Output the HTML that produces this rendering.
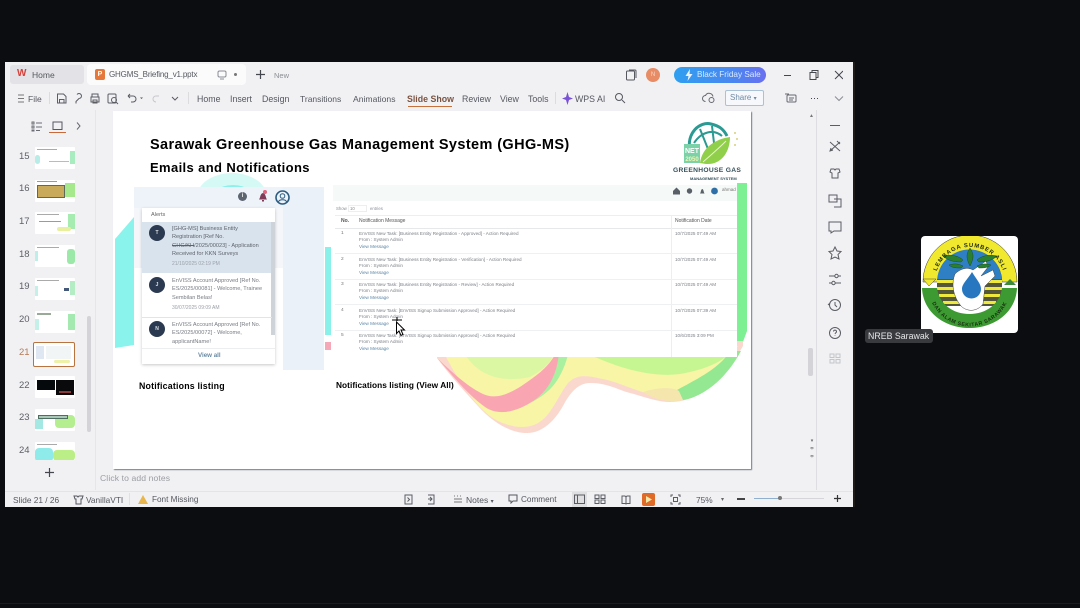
<!DOCTYPE html>
<html lang="en"><head><meta charset="utf-8"><title>GHGMS Briefing</title>
<style>
*{box-sizing:border-box}
html,body{margin:0;padding:0;width:1080px;height:608px;overflow:hidden;background:#0b0d10;font-family:"Liberation Sans",sans-serif}
#all{position:absolute;left:0;top:0;width:1080px;height:608px;filter:blur(.35px)}
.a{position:absolute;white-space:nowrap}
#win{position:absolute;left:5px;top:62px;width:848px;height:445px;background:#f1f1f4;overflow:hidden}
.t{font-size:9px;color:#55585f}
.m{font-size:8.800px;color:#55585f;top:94px}
.n{position:absolute;left:19px;font-size:9.500px;color:#5c5f65}
.th{position:absolute;left:35px;width:40px;height:22px;background:#fff;overflow:hidden;border-radius:1px}
.th i{position:absolute;display:block}
.row{position:absolute;left:359px;font-size:4.600px;line-height:6.400px;color:#7b7f86;white-space:nowrap}
.row b{font-weight:normal;color:#5c87a8}
.d{position:absolute;left:675px;font-size:4.600px;color:#7b7f86;white-space:nowrap}
.num{position:absolute;left:341px;font-size:4.800px;color:#777}
.av{position:absolute;left:149px;width:16px;height:16px;border-radius:50%;background:#2b3a50;color:#dfe3e8;font-size:5px;font-weight:bold;text-align:center;line-height:16px}
.al{position:absolute;left:172px;font-size:5.600px;line-height:8.400px;color:#777b82;white-space:nowrap}
.h{font-weight:bold;color:#000}
svg.i{position:absolute;fill:none;stroke:#5a5d63;stroke-width:1}
</style></head><body>
<div id="all">

<!-- window -->
<div id="win"></div>
<div class="a" style="left:853px;top:62px;width:2px;height:445px;background:#1d1a17"></div>

<!-- tab bar -->
<div class="a" style="left:10px;top:65px;width:74px;height:19px;background:#e3e3e7;border-radius:3px"></div>
<div class="a" style="left:87px;top:64px;width:159px;height:21px;background:#fbfbfc;border-radius:4px"></div>
<div class="a" style="left:17px;top:69px;font-size:10px;font-weight:bold;color:#d8403a;line-height:10px">W</div>
<div class="a t" style="left:32px;top:70px;font-size:8.500px">Home</div>
<div class="a" style="left:95px;top:69px;width:10px;height:11px;border-radius:2px;background:#e5783a;color:#fff;font-size:7px;font-weight:bold;text-align:center;line-height:11px">P</div>
<div class="a t" style="left:109px;top:70px;font-size:8px;letter-spacing:-.17px">GHGMS_Briefing_v1.pptx</div>
<svg class="i" style="left:216px;top:70px" width="12" height="10" viewBox="0 0 12 10"><rect x="2" y="1" width="8" height="6" rx="1.500" stroke="#8a8d93"/><path d="M4 9h4" stroke="#8a8d93"/></svg>
<div class="a" style="left:234px;top:73px;width:3px;height:3px;background:#777;border-radius:50%"></div>
<svg class="i" style="left:255px;top:69px" width="11" height="11" viewBox="0 0 11 11"><path d="M5.500 1v9M1 5.500h9" stroke="#44474d" stroke-width="1.200"/></svg>
<div class="a t" style="left:274px;top:71px;font-size:7.500px;color:#8a8d93">New</div>

<svg class="i" style="left:625px;top:69px" width="12" height="12" viewBox="0 0 12 12"><rect x="1.500" y="2" width="8" height="9" rx="1" stroke="#55585e"/><path d="M4 1h6a1 1 0 0 1 1 1v7" stroke="#55585e"/></svg>
<div class="a" style="left:646px;top:68px;width:14px;height:14px;border-radius:50%;background:#e88c66;color:#f7d6c6;font-size:6px;text-align:center;line-height:14px">N</div>
<div class="a" style="left:674px;top:67px;width:92px;height:16px;border-radius:8px;background:linear-gradient(90deg,#2f9ff0,#4b86f0 65%,#6a6ff0);color:#d9ebff;font-size:8.200px;line-height:16px;padding-left:23px">Black Friday Sale</div>
<svg class="a" style="left:685px;top:69px" width="8" height="12" viewBox="0 0 8 12"><path d="M5 0 0.500 7H3.500L2.500 12 7.500 5H4.500Z" fill="#eaf4ff"/></svg>
<svg class="i" style="left:783px;top:69px" width="60" height="12" viewBox="0 0 60 12"><path d="M1 6.500h7" stroke="#44474d"/><rect x="27" y="3.500" width="6" height="7" stroke="#44474d"/><path d="M29 3.500V1.500h6v7h-2" stroke="#44474d"/><path d="M52 2l8 8M60 2l-8 8" stroke="#44474d"/></svg>

<!-- menu bar -->
<svg class="i" style="left:17px;top:94px" width="8" height="9" viewBox="0 0 8 9"><path d="M1 1h6M1 4.500h6M1 8h6" stroke="#777"/></svg>
<div class="a m" style="left:28px;font-size:8.500px;top:94px">File</div>
<div class="a" style="left:49px;top:92px;width:1px;height:12px;background:#dcdcdf"></div>
<svg class="i" style="left:56px;top:92px" width="125" height="13" viewBox="0 0 125 13" stroke="#55585e"><path d="M1.500 2h6l2.500 2.500V11h-8.500Z M3.500 11V7.500h4.500V11"/><path d="M21 2.500a2.500 2.500 0 1 1 2 4l-3 3v2" /><path d="M36 5V2h6v3M35 5h8v5h-8Z M37 8h4v3h-4Z"/><rect x="52" y="2" width="8" height="9" rx="1"/><circle cx="58" cy="8" r="2.500"/><path d="M60 10l2 2"/><path d="M72 4h5a3 3 0 0 1 0 6h-2M72 4l2-2M72 4l2 2"/><path d="M84 5.500l1.500 1.500L87 5.500" fill="#555" stroke="none"/><path d="M103 4h-3a3 3 0 0 0 0 6" stroke="#c8c8cc"/><path d="M116 5l3 3 3-3"/></svg>
<div class="a" style="left:188px;top:92px;width:1px;height:12px;background:#dcdcdf"></div>
<div class="a m" style="left:197px">Home</div>
<div class="a m" style="left:230px">Insert</div>
<div class="a m" style="left:262px">Design</div>
<div class="a m" style="left:300px;font-size:8.500px">Transitions</div>
<div class="a m" style="left:353px;font-size:8.600px">Animations</div>
<div class="a m" style="left:407px;font-weight:bold;color:#7a5340;font-size:8.800px">Slide Show</div>
<div class="a" style="left:408px;top:106px;width:44px;height:1px;background:#c8703c"></div>
<div class="a m" style="left:462px">Review</div>
<div class="a m" style="left:500px">View</div>
<div class="a m" style="left:528px">Tools</div>
<div class="a" style="left:555px;top:92px;width:1px;height:12px;background:#dcdcdf"></div>
<svg class="a" style="left:562px;top:92px" width="11" height="13" viewBox="0 0 11 13"><path d="M5.500 0 7 5l4 1.500L7 8l-1.500 5L4 8 0 6.500 4 5Z" fill="#7a52d8"/></svg>
<div class="a m" style="left:575px">WPS AI</div>
<svg class="i" style="left:614px;top:92px" width="12" height="12" viewBox="0 0 12 12"><circle cx="5" cy="5" r="3.500" stroke="#55585e"/><path d="M8 8l3 3" stroke="#55585e"/></svg>
<svg class="i" style="left:702px;top:92px" width="13" height="12" viewBox="0 0 13 12"><path d="M3.500 9.500a3 3 0 0 1 0-6 4 4 0 0 1 7.500 1" stroke="#66696f"/><circle cx="9.500" cy="8" r="2.500" stroke="#66696f"/></svg>
<div class="a" style="left:725px;top:90px;width:39px;height:16px;border:1px solid #a9c2d6;border-radius:2px;background:#f6f8fb;color:#6d8ba5;font-size:8px;line-height:14px;padding-left:4px">Share <span style="font-size:6px">▾</span></div>
<svg class="i" style="left:785px;top:92px" width="60" height="13" viewBox="0 0 60 13"><rect x="2" y="3" width="9" height="7" rx="1" stroke="#66696f"/><path d="M0 2h4M4 6h5M4 8h4" stroke="#66696f"/><path d="M26 6.500h1M29 6.500h1M32 6.500h1" stroke="#44474d"/><path d="M50 4.500l4 4 4-4" stroke="#8a8d93"/></svg>

<!-- left panel -->
<div class="a" style="left:95px;top:110px;width:1px;height:380px;background:#e6e6e9"></div>
<svg class="i" style="left:31px;top:121px" width="56" height="11" viewBox="0 0 56 11"><path d="M1 1h2v2H1ZM1 5h2v2H1ZM1 9h2v1H1ZM5 2h6M5 6h6M5 9.500h4" stroke="#6a6d73"/><rect x="22" y="1" width="9" height="7.500" stroke="#55585e"/><path d="M46 1.500l3 3.500-3 3.500" stroke="#66696f"/></svg>
<div class="a" style="left:49px;top:132px;width:17px;height:1px;background:#c9683a"></div>

<div class="n" style="top:151px">15</div>
<div class="th" style="top:147px"><i style="left:2px;top:2px;width:20px;height:1px;background:#aaa"></i><i style="left:0;top:8px;width:5px;height:9px;background:#b8ece6;border-radius:3px"></i><i style="left:35px;top:4px;width:5px;height:13px;background:#a9ecc0"></i><i style="left:14px;top:14px;width:20px;height:1px;background:#bbb"></i></div>
<div class="n" style="top:183px">16</div>
<div class="th" style="top:180px"><i style="left:2px;top:5px;width:28px;height:13px;background:#c9a95a;border:1px solid #5c6a58"></i><i style="left:30px;top:3px;width:10px;height:14px;background:#a6e88c"></i><i style="left:2px;top:1px;width:20px;height:1px;background:#999"></i></div>
<div class="n" style="top:216px">17</div>
<div class="th" style="top:212px"><i style="left:2px;top:2px;width:22px;height:1px;background:#aaa"></i><i style="left:33px;top:2px;width:7px;height:15px;background:#a6ecb0"></i><i style="left:22px;top:15px;width:14px;height:4px;background:#e8f0a0;border-radius:3px"></i><i style="left:4px;top:9px;width:22px;height:1px;background:#99a"></i></div>
<div class="n" style="top:249px">18</div>
<div class="th" style="top:245px"><i style="left:2px;top:2px;width:22px;height:1px;background:#aaa"></i><i style="left:32px;top:4px;width:8px;height:15px;background:#9be8a8;border-radius:3px"></i><i style="left:0;top:6px;width:3px;height:10px;background:#bdeee8"></i></div>
<div class="n" style="top:281px">19</div>
<div class="th" style="top:278px"><i style="left:2px;top:2px;width:22px;height:1px;background:#aaa"></i><i style="left:29px;top:10px;width:5px;height:3px;background:#44597a"></i><i style="left:35px;top:3px;width:5px;height:14px;background:#b4ecc4"></i><i style="left:0;top:8px;width:3px;height:10px;background:#c4f0ea"></i></div>
<div class="n" style="top:314px">20</div>
<div class="th" style="top:311px"><i style="left:2px;top:2px;width:14px;height:2px;background:#9a9"></i><i style="left:33px;top:3px;width:7px;height:16px;background:#a4eab0"></i><i style="left:0;top:8px;width:4px;height:11px;background:#c4f0ea"></i></div>
<div class="n" style="top:347px;color:#b57a55">21</div>
<div class="a" style="left:33px;top:342px;width:42px;height:25px;background:#fff;border:1.500px solid #b9733f;border-radius:2px"><i style="position:absolute;left:2px;top:3px;width:8px;height:13px;background:#dfe7f2"></i><i style="position:absolute;left:12px;top:3px;width:25px;height:13px;background:#f2f5f6"></i><i style="position:absolute;left:20px;top:17px;width:16px;height:3px;background:#eef1a8;border-radius:2px"></i></div>
<div class="n" style="top:380px">22</div>
<div class="th" style="top:376px"><i style="left:2px;top:4px;width:18px;height:10px;background:#06090c"></i><i style="left:21px;top:4px;width:18px;height:15px;background:#0a0a0c"></i><i style="left:24px;top:15px;width:12px;height:2px;background:#8a3a3a"></i></div>
<div class="n" style="top:412px">23</div>
<div class="th" style="top:409px"><i style="left:0;top:10px;width:8px;height:10px;background:#a4e8e4"></i><i style="left:20px;top:6px;width:20px;height:13px;background:#b4ee90;border-radius:4px"></i><i style="left:3px;top:6px;width:30px;height:4px;background:#a9c8b8;border:1px solid #4e6e62"></i></div>
<div class="n" style="top:445px">24</div>
<div class="th" style="top:442px"><i style="left:0;top:6px;width:18px;height:14px;background:#8feaea;border-radius:4px"></i><i style="left:18px;top:8px;width:22px;height:11px;background:#bcee88;border-radius:4px"></i><i style="left:2px;top:2px;width:20px;height:1px;background:#aaa"></i></div>
<div class="a" style="left:5px;top:460px;width:90px;height:30px;background:#f1f1f4"></div>
<svg class="i" style="left:44px;top:467px" width="11" height="11" viewBox="0 0 11 11"><path d="M5.500 1v9M1 5.500h9" stroke="#44474d" stroke-width="1.200"/></svg>
<div class="a" style="left:87px;top:316px;width:4px;height:116px;background:#d4d4d8;border-radius:2px"></div>

<!-- slide -->
<div class="a" style="left:113px;top:111px;width:638px;height:358px;background:#fff;box-shadow:1px 1px 1px #77797c;overflow:hidden" id="slide">
<svg style="position:absolute;left:0;top:0" width="638" height="358" viewBox="0 0 638 358">
<ellipse cx="119" cy="86" rx="35" ry="24" fill="#d5faf5"/>
<ellipse cx="120" cy="92" rx="25" ry="18" fill="#8ef0ea"/>
<path d="M2 128 21 106V234L2 237Z" fill="#8af3ec"/>
<path d="M212 136H218V224H212Z" fill="#8af0ea"/>
<path d="M212 231H218V239H212Z" fill="#f5a9b8"/>
<path d="M624 72H634V220L624 247Z" fill="#7df094"/>
<path d="M324 247C335 262 350 279 365 295C380 312 398 322 414 322C430 322 442 309 450 295C457 282 465 272 477 272C495 272 505 279 517 282C532 286 545 291 557 291C575 291 590 283 600 272C612 262 620 252 630 235V230H324Z" fill="#fbd8ce"/>
<path d="M330 240C345 270 365 300 385 310C400 317 415 318 425 312C438 305 445 285 455 272C465 262 475 265 490 268C510 272 530 285 555 285C575 285 590 275 600 262L625 235Z" fill="#f8f5a6"/>
<path d="M350 240C364 266 390 272 417 266C430 259 440 250 442 240Z" fill="#dcf7a4"/>
<path d="M324 240V247C340 262 355 276 370 283C385 290 402 280 417 269C430 260 438 252 444 240H450C445 262 435 282 417 292C402 301 385 305 372 296C355 284 340 265 324 247Z" fill="#f9a6b2"/>
<path d="M446 240H456C449 269 437 282 417 292C435 282 445 262 446 240Z" fill="#a9f0a0"/>
<path d="M470 240C500 256 544 270 577 261C594 257 607 252 620 240Z" fill="#c6f692"/>
<path d="M628 240C620 255 608 270 594 279C585 285 577 288 570 289C568 285 566 282 564 279C584 268 607 257 617 240Z" fill="#94e892"/>
<path d="M530 281C545 276 560 276 566 280L570 289C555 292 540 288 530 281Z" fill="#f5e6ae"/>
</svg>
<div class="a h" style="left:37px;top:25.500px;font-size:14.500px;letter-spacing:.39px">Sarawak Greenhouse Gas Management System (GHG-MS)</div>
<div class="a h" style="left:37px;top:49px;font-size:13px;letter-spacing:.37px">Emails and Notifications</div>
<div class="a h" style="left:26px;top:270px;font-size:8.800px;letter-spacing:.2px">Notifications listing</div>
<div class="a h" style="left:223px;top:269px;font-size:8.300px;letter-spacing:.05px">Notifications listing (View All)</div>
<!-- logo -->
<svg style="position:absolute;left:565px;top:8px" width="65" height="48" viewBox="0 0 65 48">
<path d="M12 32C8 14 22 2 33 5 42 7 46 11 49 17" fill="none" stroke="#2a9a92" stroke-width="3"/>
<path d="M16 24C24 12 36 10 44 17M22 10 30 30M34 7 36 24" fill="none" stroke="#2a9a92" stroke-width="2"/>
<path d="M22 44C24 28 38 20 52 18 52 32 44 46 28 45Z" fill="#8fcf4a"/>
<path d="M25 43C33 36 40 30 48 22" stroke="#e8f5c8" fill="none"/>
<rect x="6" y="25" width="16" height="19" fill="#7cd2a8"/>
<text x="14" y="34" font-size="7" font-weight="bold" fill="#fff" text-anchor="middle" font-family="Liberation Sans">NET</text>
<text x="14" y="42" font-size="6" font-weight="bold" fill="#f0f5b0" text-anchor="middle" font-family="Liberation Sans">2050</text>
<circle cx="57" cy="14" r="1" fill="#d9cf7a"/><circle cx="59" cy="20" r="1" fill="#d9cf7a"/><circle cx="57" cy="26" r="1" fill="#d9cf7a"/>
</svg>
<div class="a" style="left:560px;top:56px;font-size:6.700px;font-weight:bold;color:#35505a;letter-spacing:.3px">GREENHOUSE GAS</div>
<div class="a" style="left:577px;top:65px;font-size:4px;font-weight:bold;color:#35505a">MANAGEMENT SYSTEM</div>
</div>

<!-- left notification shot -->
<div class="a" style="left:134px;top:187px;width:190px;height:21px;background:#eef3fa"></div>
<div class="a" style="left:134px;top:208px;width:149px;height:60px;background:#f4f6fa"></div>
<div class="a" style="left:283px;top:187px;width:41px;height:183px;background:#eaf1f9"></div>
<div class="a" style="left:238px;top:192px;width:9px;height:9px;border-radius:50%;background:#5d6570;color:#eee;font-size:6px;font-weight:bold;text-align:center;line-height:9px">i</div>
<svg class="a" style="left:258px;top:190px" width="10" height="12" viewBox="0 0 10 12"><path d="M1 9.500C2.500 8 2 3.500 5 3 8 3.500 7.500 8 9 9.500Z M4 10h2v1.500H4Z" fill="#7f3b58"/><circle cx="7" cy="2" r="2" fill="#e0657d"/></svg>
<svg class="a" style="left:275px;top:190px" width="15" height="15" viewBox="0 0 15 15"><circle cx="7.500" cy="7.500" r="6.500" fill="#eef3fa" stroke="#2b5b80" stroke-width="1.600"/><circle cx="7.500" cy="6" r="2.300" fill="none" stroke="#2b5b80"/><path d="M3.500 12c.5-3 7.500-3 8 0" fill="none" stroke="#2b5b80"/></svg>

<div class="a" style="left:142px;top:208px;width:133px;height:156px;background:#fff;box-shadow:0 1px 3px rgba(0,0,0,.22)"></div>
<div class="a" style="left:151px;top:212px;font-size:5.600px;color:#666">Alerts</div>
<div class="a" style="left:142px;top:222px;width:130px;height:51px;background:#d9e3ee"></div>
<div class="a" style="left:271px;top:222px;width:4px;height:113px;background:#ced3da"></div>
<div class="av" style="top:225px">T</div>
<div class="al" style="top:225px;color:#5e636b">[GHG-MS] Business Entity<br>Registration [Ref No.<br><span style="text-decoration:line-through">GHG/KH</span>/2025/00023] - Application<br>Received for KKN Surveys</div>
<div class="al" style="top:260px;color:#9ba0a8;font-size:5px">21/10/2025 02:19 PM</div>
<div class="av" style="top:277px">J</div>
<div class="al" style="top:277px">EnVISS Account Approved [Ref No.<br>ES/2025/00081] - Welcome, Trainee<br>Sembilan Belas!</div>
<div class="al" style="top:304px;color:#9ba0a8;font-size:5px">30/07/2025 09:09 AM</div>
<div class="a" style="left:142px;top:317px;width:130px;height:1px;background:#e2e4e8"></div>
<div class="av" style="top:321px">N</div>
<div class="al" style="top:321px">EnVISS Account Approved [Ref No.<br>ES/2025/00072] - Welcome,<br>applicantName!</div>
<div class="a" style="left:142px;top:348px;width:133px;height:1px;background:#edeef0"></div>
<div class="a" style="left:198px;top:352px;font-size:6.200px;font-weight:bold;color:#6a8aa4">View all</div>

<!-- right table shot -->
<div class="a" style="left:333px;top:185px;width:404px;height:172px;background:#fff"></div>
<div class="a" style="left:333px;top:185px;width:404px;height:16px;background:#f5f9f7"></div>
<svg class="a" style="left:672px;top:186px" width="65" height="10" viewBox="0 0 65 10"><path d="M1 5 4.500 1.500 8 5V8.500H1Z" fill="#5a6068"/><circle cx="17.500" cy="5" r="2.700" fill="#5a6068"/><path d="M28 7.500c1-1 .7-4 2.300-4.500 1.500.5 1.300 3.500 2.300 4.500Z" fill="#5a6068"/><circle cx="42.500" cy="5" r="3.400" fill="#2f6fa8"/></svg>
<div class="a" style="left:722px;top:187px;font-size:4.500px;color:#777">ahmad</div>
<div class="a" style="left:336px;top:206px;font-size:4.300px;color:#8a8e94">Show</div>
<div class="a" style="left:348px;top:205px;width:19px;height:7px;border:1px solid #eee;font-size:4.300px;color:#888;padding-left:1px;line-height:5px">10</div>
<div class="a" style="left:370px;top:206px;font-size:4.300px;color:#8a8e94">entries</div>
<div class="a" style="left:335px;top:215px;width:402px;height:1px;background:#eceef0"></div>
<div class="a" style="left:335px;top:228px;width:402px;height:1px;background:#e6e8ea"></div>
<div class="a" style="left:671px;top:215px;width:1px;height:142px;background:#eceef0"></div>
<div class="a" style="left:341px;top:218px;font-size:5px;color:#555;font-weight:bold">No.</div>
<div class="a" style="left:359px;top:218px;font-size:5px;color:#555">Notification Message</div>
<div class="a" style="left:675px;top:218px;font-size:5px;color:#555">Notification Date</div>

<div class="num" style="top:231px">1</div>
<div class="row" style="top:231px">EnVISS New Task: [Business Entity Registration - Approved] - Action Required<br>From : System Admin<br><b>View Message</b></div>
<div class="d" style="top:231px">10/7/2025 07:49 AM</div>
<div class="a" style="left:335px;top:253px;width:402px;height:1px;background:#eff0f2"></div>
<div class="num" style="top:257px">2</div>
<div class="row" style="top:257px">EnVISS New Task: [Business Entity Registration - Verification] - Action Required<br>From : System Admin<br><b>View Message</b></div>
<div class="d" style="top:257px">10/7/2025 07:49 AM</div>
<div class="a" style="left:335px;top:279px;width:402px;height:1px;background:#eff0f2"></div>
<div class="num" style="top:282px">3</div>
<div class="row" style="top:282px">EnVISS New Task: [Business Entity Registration - Review] - Action Required<br>From : System Admin<br><b>View Message</b></div>
<div class="d" style="top:282px">10/7/2025 07:49 AM</div>
<div class="a" style="left:335px;top:304px;width:402px;height:1px;background:#eff0f2"></div>
<div class="num" style="top:308px">4</div>
<div class="row" style="top:308px">EnVISS New Task: [EnVISS Signup Submission Approved] - Action Required<br>From : System Admin<br><b>View Message</b></div>
<div class="d" style="top:308px">10/7/2025 07:39 AM</div>
<div class="a" style="left:335px;top:330px;width:402px;height:1px;background:#eff0f2"></div>
<div class="num" style="top:333px">5</div>
<div class="row" style="top:333px">EnVISS New Task: [EnVISS Signup Submission Approved] - Action Required<br>From : System Admin<br><b>View Message</b></div>
<div class="d" style="top:333px">10/6/2025 3:09 PM</div>

<!-- mouse cursor -->
<svg class="a" style="left:391px;top:317px" width="16" height="20" viewBox="0 0 16 20"><path d="M5.500 5V16.500L8 14 10 18.500 12 17.500 10 13H13.500Z" fill="#fff" stroke="#000" stroke-width="1"/><path d="M6 0v4M1 3h10" stroke="#000" stroke-width="1.100"/></svg>

<!-- right side of workspace -->
<div class="a" style="left:816px;top:110px;width:1px;height:380px;background:#dedee2"></div>
<div class="a" style="left:808px;top:348px;width:5px;height:28px;background:#d4d4d8;border-radius:2px"></div>
<div class="a" style="left:809px;top:113px;font-size:5px;color:#777">▲</div>
<div class="a" style="left:809px;top:437px;font-size:5px;line-height:8px;color:#666;white-space:normal;width:6px;text-align:center">▾<br>≑<br>≑</div>
<svg class="i" style="left:827px;top:120px" width="16" height="246" viewBox="0 0 16 246" stroke="#66696f">
<path d="M3 5.500h10"/>
<path d="M3 22l10 9M13 22 3 31M10 21l3 3M4 28l-1 3 3-1"/>
<path d="M4 49h3l1 1 1-1h3l1 3-2 1v5H5v-5l-2-1Z"/>
<path d="M2 75h8v7H2ZM7 79h7v8H7"/>
<path d="M2 102h12v9H7l-3 2v-2H2Z"/>
<path d="M8 127l2 4 4 .5-3 3 1 4.500-4-2-4 2 1-4.500-3-3 4-.5Z"/>
<path d="M2 156h6M11 156h3M2 163h3M8 163h6"/><circle cx="9.500" cy="156" r="1.700"/><circle cx="6.500" cy="163" r="1.700"/>
<circle cx="8" cy="185" r="5.500"/><path d="M8 182v3l2 2M1 185l1.500-1.500"/>
<circle cx="8" cy="213" r="5.500"/><path d="M6.500 211.500a1.500 1.500 0 1 1 2 1.500l-.5 1M8 215.500v.5"/>
<g stroke="#c4c5c9"><rect x="3" y="234" width="4" height="3.500"/><rect x="9" y="234" width="4" height="3.500"/><rect x="3" y="239.500" width="4" height="3.500"/><rect x="9" y="239.500" width="4" height="3.500"/></g>
</svg>

<!-- notes -->
<div class="a" style="left:100px;top:473px;font-size:8.600px;color:#9a9da2;letter-spacing:.1px">Click to add notes</div>

<!-- status bar -->
<div class="a" style="left:5px;top:491px;width:848px;height:1px;background:#e4e4e7"></div>
<div class="a t" style="left:13px;top:495px;font-size:8.300px">Slide 21 / 26</div>
<svg class="i" style="left:73px;top:494px" width="11" height="11" viewBox="0 0 11 11"><path d="M1 2h3l1 1 1-1h4l-1 3H8v5H3V5H2Z" stroke="#55585e"/></svg>
<div class="a t" style="left:86px;top:495px;font-size:8.300px">VanillaVTI</div>
<div class="a" style="left:129px;top:493px;width:1px;height:12px;background:#e0e0e3"></div>
<svg class="a" style="left:138px;top:495px" width="10" height="9" viewBox="0 0 10 9"><path d="M5 0 10 9H0Z" fill="#e8b64c"/></svg>
<div class="a t" style="left:152px;top:495px;font-size:8.200px">Font Missing</div>
<svg class="i" style="left:404px;top:494px" width="34" height="11" viewBox="0 0 34 11" stroke="#55585e"><rect x="1" y="1" width="7" height="9"/><path d="M3.500 3.500l2 2-2 2"/><path d="M24 1h6v9h-6M24 5h4M26 3l2 2-2 2"/></svg>
<svg class="i" style="left:453px;top:494px" width="10" height="10" viewBox="0 0 10 10"><path d="M1 2h1M4 2h1M7 2h1M1 5h8M1 8h8" stroke="#777"/></svg>
<div class="a t" style="left:466px;top:495px;font-size:8.500px">Notes <span style="font-size:6px">▾</span></div>
<svg class="i" style="left:508px;top:494px" width="10" height="10" viewBox="0 0 10 10"><path d="M1 1h8v6H5L3 9V7H1Z" stroke="#55585e"/></svg>
<div class="a t" style="left:521px;top:495px;font-size:8.200px">Comment</div>
<div class="a" style="left:572px;top:492px;width:15px;height:15px;background:#dfdfe2"></div>
<svg class="i" style="left:574px;top:494px" width="60" height="11" viewBox="0 0 60 11" stroke="#55585e"><rect x=".5" y="1" width="10" height="8.500"/><path d="M3.500 1v8.500"/><rect x="21" y="1" width="4" height="3.500"/><rect x="27" y="1" width="4" height="3.500"/><rect x="21" y="6" width="4" height="3.500"/><rect x="27" y="6" width="4" height="3.500"/><path d="M48 2h3l1 1 1-1h3v7.500h-3l-1 .5-1-.5h-3ZM52 3v7"/></svg>
<div class="a" style="left:642px;top:493px;width:13px;height:13px;background:#e06a28;border-radius:2px"></div>
<svg class="a" style="left:646px;top:496px" width="6" height="7" viewBox="0 0 6 7"><path d="M0 0 6 3.500 0 7Z" fill="#f5e9a8"/></svg>
<svg class="i" style="left:670px;top:494px" width="11" height="11" viewBox="0 0 11 11" stroke="#55585e"><path d="M1 3V1h2M8 1h2v2M10 8v2H8M3 10H1V8"/><rect x="3.500" y="3.500" width="4" height="4"/></svg>
<div class="a t" style="left:696px;top:495px;font-size:8.300px">75%</div>
<div class="a" style="left:721px;top:496px;font-size:6px;color:#666">▾</div>
<div class="a" style="left:737px;top:498px;width:8px;height:1.500px;background:#444"></div>
<div class="a" style="left:754px;top:498px;width:70px;height:1px;background:#d6d6da"></div>
<div class="a" style="left:754px;top:498px;width:25px;height:1px;background:#8fb0cf"></div>
<div class="a" style="left:778px;top:496px;width:4px;height:4px;border-radius:50%;background:#777"></div>
<svg class="i" style="left:833px;top:494px" width="9" height="9" viewBox="0 0 9 9"><path d="M4.500 1v7M1 4.500h7" stroke="#333" stroke-width="1.200"/></svg>

<!-- NREB tile -->
<div class="a" style="left:921px;top:236px;width:97px;height:97px;background:#fff;border-radius:4px"></div>
<svg class="a" style="left:921px;top:236px" width="97" height="97" viewBox="0 0 97 97">
<defs><path id="arcT" d="M14 46A35 35 0 0 1 84 46"/><path id="arcB" d="M8 58A41.500 41.500 0 0 0 89 58"/></defs>
<path d="M2 46A47 47 0 0 1 96 46H81A32 32 0 0 0 17 46Z" fill="#f1e92d" stroke="#333" stroke-width=".5"/>
<path d="M16 46A32.500 32.500 0 0 1 81 46Z" fill="#2f7fc4"/>
<path d="M16 43H81V70H16Z" fill="#55573a"/>
<path d="M16 44H81V47H16ZM16 51H81V54H16ZM18 58H79V61H18ZM22 65H75V68H22Z" fill="#eee93a"/>
<path d="M1 52H16C18 68 32 78 48.500 78S79 68 81 52H96C95 76 74 92 48.500 92S2 76 1 52Z" fill="#3d9a32"/>
<path d="M2 43H15L8 50Z" fill="#f1e92d" stroke="#444" stroke-width=".5"/>
<path d="M83 49 89 43 95 49Z" fill="#3d8a3a"/>
<path d="M34 38C40 32 47 31 52 34L65 25 67 31 60 40 72 34 74 40 64 50 62 68C56 76 46 76 40 70 32 60 30 48 34 38Z" fill="#fff" stroke="#444" stroke-width=".5"/>
<path d="M51 36C56 44 60 48 60 53A9.500 9.500 0 0 1 41 53C41 48 46 44 51 36Z" fill="#2777c0"/>
<path d="M40 26C32 26 26 24 22 20 30 18 38 20 42 24ZM58 26C66 26 72 24 76 20 68 18 60 20 56 24ZM49 30C45 22 45 18 49 12 53 18 53 22 49 30ZM40 32C36 32 31 32 28 29 34 27 38 28 42 30ZM58 32C62 32 67 32 70 29 64 27 60 28 56 30Z" fill="#2a8030" stroke="#14401a" stroke-width=".4"/>
<text font-size="5.800" font-weight="bold" fill="#1d2a12" font-family="Liberation Sans" letter-spacing=".9" text-anchor="middle"><textPath href="#arcT" startOffset="50%">LEMBAGA SUMBER ASLI</textPath></text>
<text font-size="5.300" font-weight="bold" fill="#16300f" font-family="Liberation Sans" letter-spacing=".5" text-anchor="middle"><textPath href="#arcB" startOffset="50%">DAN ALAM SEKITAR SARAWAK</textPath></text>
</svg>
<div class="a" style="left:865px;top:329px;width:68px;height:14px;background:#383a3e;border-radius:3px;color:#e6e6e8;font-size:8.800px;line-height:14px;padding-left:3px">NREB Sarawak</div>

<div class="a" style="left:0;top:603px;width:1080px;height:1px;background:#1b1c1e"></div>
</div>
</body></html>
